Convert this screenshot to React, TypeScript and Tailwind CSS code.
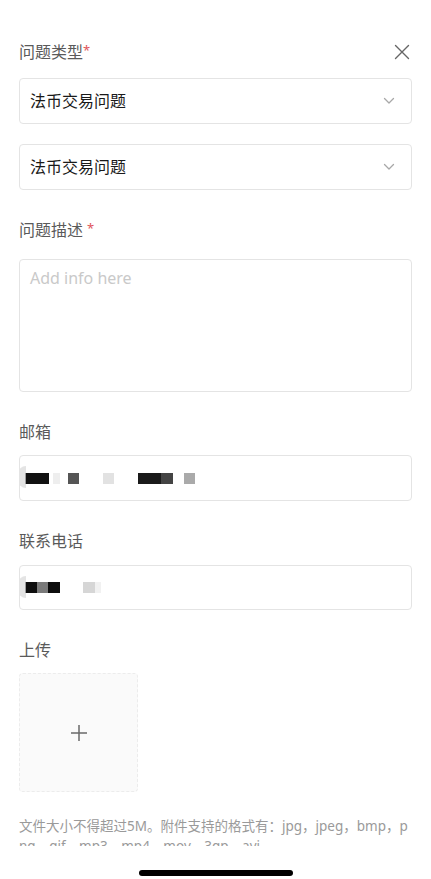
import { useState } from 'react';

function Label({ text, required, spaced }: { text: string; required?: boolean; spaced?: boolean }) {
  return (
    <div className="h-6 flex items-center text-[16px] leading-6 text-[#5a5a5a]">
      {text}
      {required && <span className={`text-[#e0555b] text-[13px] ${spaced ? 'ml-[4px]' : ''} -mt-[4px]`}>*</span>}
    </div>
  );
}

function Chevron() {
  return (
    <svg width="12" height="8" viewBox="0 0 12 8" fill="none">
      <path d="M1.5 1.5 6 6l4.5-4.5" stroke="#a8a8a8" strokeWidth="1.3" strokeLinecap="round" strokeLinejoin="round" />
    </svg>
  );
}

function Select({ value, className }: { value: string; className?: string }) {
  return (
    <button
      type="button"
      className={`w-full h-[46px] flex items-center justify-between pl-[10px] pr-[16px] border border-[#e4e4e4] rounded-[4px] bg-white text-left text-[16px] text-[#1a1a1a] ${className ?? ''}`}
    >
      <span>{value}</span>
      <Chevron />
    </button>
  );
}

// redacted values: the screenshot shows pixelated blocks here
function Redacted({ blocks }: { blocks: { w: number; gap: number; color: string }[] }) {
  return (
    <div className="flex items-center h-[11px]">
      {blocks.map((b, i) => (
        <span key={i} className="h-[11px] block" style={{ width: b.w, marginLeft: b.gap, background: b.color }} />
      ))}
    </div>
  );
}

export default function App() {
  const [desc, setDesc] = useState('');

  return (
    <div className="relative min-h-[879px] bg-white font-['Noto_Sans','Noto_Sans_CJK_SC',sans-serif]">
      <div className="px-[19px] pt-10 flex flex-col">
        <div className="flex items-center justify-between">
          <Label text="问题类型" required />
          <button type="button" className="mr-[2px]" aria-label="close">
            <svg width="16" height="16" viewBox="0 0 16 16" fill="none">
              <path d="M1.5 1.5l13 13M14.5 1.5l-13 13" stroke="#666" strokeWidth="1.4" strokeLinecap="round" />
            </svg>
          </button>
        </div>

        <Select value="法币交易问题" className="mt-[14px]" />
        <Select value="法币交易问题" className="mt-5" />

        <div className="mt-7">
          <Label text="问题描述" required spaced />
        </div>
        <textarea
          value={desc}
          onChange={(e) => setDesc(e.target.value)}
          placeholder="Add info here"
          className="mt-[17px] h-[133px] w-full resize-none border border-[#e4e4e4] rounded-[4px] px-[10px] pt-[6px] text-[16px] leading-6 text-[#1c1c1c] placeholder:text-[#c9c9c9] outline-none"
        />

        <div className="mt-7">
          <Label text="邮箱" />
        </div>
        <div className="mt-[11px] h-[46px] border border-[#e4e4e4] rounded-[4px] flex items-center pl-[5px] relative overflow-hidden">
          <span className="absolute left-[-2px] top-[10px] w-[8px] h-[22px] rounded-l-full bg-[#d8d8d8] opacity-70" />
          <Redacted
            blocks={[
              { w: 24, gap: 0, color: '#111' },
              { w: 7, gap: 4, color: '#eee' },
              { w: 11, gap: 8, color: '#555' },
              { w: 11, gap: 24, color: '#e2e2e2' },
              { w: 23, gap: 24, color: '#1a1a1a' },
              { w: 12, gap: 0, color: '#444' },
              { w: 11, gap: 11, color: '#aaa' },
            ]}
          />
        </div>

        <div className="mt-7">
          <Label text="联系电话" />
        </div>
        <div className="mt-3 h-[45px] border border-[#e4e4e4] rounded-[4px] flex items-center pl-[5px] relative overflow-hidden">
          <span className="absolute left-[-2px] top-[10px] w-[8px] h-[22px] rounded-l-full bg-[#d8d8d8] opacity-70" />
          <Redacted
            blocks={[
              { w: 12, gap: 0, color: '#0d0d0d' },
              { w: 11, gap: 0, color: '#7a7a7a' },
              { w: 12, gap: 0, color: '#0d0d0d' },
              { w: 12, gap: 23, color: '#d6d6d6' },
              { w: 6, gap: 0, color: '#f1f1f1' },
            ]}
          />
        </div>

        <div className="mt-7">
          <Label text="上传" />
        </div>
        <button
          type="button"
          className="mt-[11px] w-[119px] h-[119px] bg-[#fafafa] border border-dashed border-[#ececec] rounded-[4px] flex items-center justify-center"
        >
          <svg width="18" height="18" viewBox="0 0 18 18" fill="none">
            <path d="M9 1v16M1 9h16" stroke="#6a6a6a" strokeWidth="1.5" />
          </svg>
        </button>

        <div className="mt-6 h-[30px] overflow-hidden text-[13.5px] leading-5 text-[#9a9a9a] break-all">
          文件大小不得超过5M。附件支持的格式有：jpg，jpeg，bmp，png，gif，mp3，mp4，mov，3gp，avi
        </div>
      </div>

      <div className="absolute bottom-[3px] left-1/2 -translate-x-1/2 w-[154px] h-[6px] rounded-full bg-black" />
    </div>
  );
}
